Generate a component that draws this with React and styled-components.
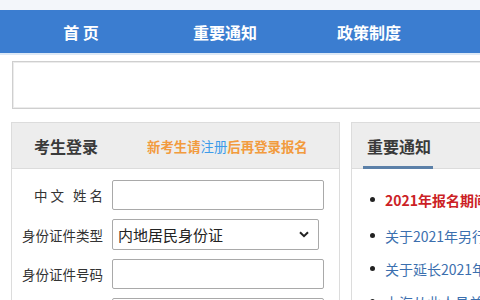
import React from 'react';
import styled, { createGlobalStyle } from 'styled-components';

const GlobalStyle = createGlobalStyle`
  html, body {
    margin: 0;
    padding: 0;
    overflow: hidden;
    background: #fff;
  }
  body {
    font-family: "Noto Sans CJK SC", "Noto Sans", sans-serif;
    color: #333;
  }
`;

const Page = styled.div`
  width: 1000px;
`;

const TopStrip = styled.div`
  height: 10px;
  background: #f3f6fa;
`;

const Nav = styled.nav`
  display: flex;
  height: 43px;
  padding-left: 9px;
  background: #3b7dd0;
  border-bottom: 2px solid #dde9f6;
`;

const NavItem = styled.a`
  width: 144px;
  display: flex;
  align-items: center;
  justify-content: center;
  color: #fff;
  font-size: 16px;
  font-weight: 700;
  white-space: pre;
  text-decoration: none;
`;

const Banner = styled.div`
  margin: 6px 0 0 12px;
  height: 46px;
  border: 1px solid #cfcfcf;
  box-shadow: inset 0 0 0 1px #ececec;
`;

const Main = styled.div`
  display: flex;
  gap: 11px;
  margin: 13px 0 0 11px;
  align-items: flex-start;
`;

const Panel = styled.section`
  width: ${({ width }) => width}px;
  border: 1px solid #dcdcdc;
  background: #fff;
`;

const PanelHead = styled.div`
  height: 45px;
  display: flex;
  align-items: center;
  background: #ededed;
  border-bottom: 1px solid #dcdcdc;
  padding-left: ${({ pad }) => pad}px;
  position: relative;
`;

const HeadTitle = styled.h2`
  margin: 0;
  font-size: 16px;
  font-weight: 700;
  color: #3a3a3a;
`;

const HeadNote = styled.span`
  margin-left: 49px;
  font-size: 13.4px;
  font-weight: 700;
  color: #f29b3e;
`;

const Link = styled.a`
  color: #3d9be9;
  font-weight: 400;
`;

const TabLine = styled.div`
  position: absolute;
  left: 11px;
  bottom: -1px;
  width: 70px;
  height: 3px;
  background: #5b80a8;
`;

const Form = styled.div`
  display: grid;
  grid-template-columns: 81px 212px;
  column-gap: 9px;
  row-gap: 9px;
  padding: 11px 0 0 10px;
  align-items: center;
`;

const Label = styled.label`
  font-size: 13.5px;
  color: #333;
  text-align: right;
  white-space: nowrap;
  letter-spacing: ${({ spread }) => (spread ? '3px' : '0')};
  margin-right: ${({ spread }) => (spread ? '-3px' : '0')};
`;

const Input = styled.div`
  height: 28px;
  border: 1px solid #a9a9a9;
  border-radius: 2px;
  background: #fff;
`;

const Select = styled.div`
  width: 207px;
  height: 31px;
  border: 1px solid #a9a9a9;
  border-radius: 2px;
  display: flex;
  align-items: center;
  justify-content: space-between;
  padding: 0 9px 0 5px;
  box-sizing: border-box;
  font-size: 15px;
  color: #222;
`;

const NoticeList = styled.ul`
  list-style: none;
  margin: 0;
  padding: 14px 0 0 15px;
`;

const Notice = styled.li`
  display: flex;
  align-items: center;
  height: 33px;
  margin-bottom: ${({ hot }) => (hot ? '3px' : '0')};
  font-size: 14px;
  white-space: nowrap;
  color: ${({ hot }) => (hot ? '#cc1f26' : '#3b6fae')};
  font-weight: ${({ hot }) => (hot ? 700 : 400)};
  &::before {
    content: '';
    width: 5px;
    height: 5px;
    border-radius: 50%;
    background: #222;
    margin: 0 10px 0 3px;
    flex: none;
  }
`;

const Chevron = () => (
  <svg width="10" height="7" viewBox="0 0 10 7">
    <path d="M1 1.2 L5 5.2 L9 1.2" fill="none" stroke="#222" strokeWidth="2" />
  </svg>
);

const navItems = ['首 页', '重要通知', '政策制度', '报名入口'];

const notices = [
  { text: '2021年报名期间考生须知', hot: true },
  { text: '关于2021年另行组织考试的通知' },
  { text: '关于延长2021年报名时间的通知' },
  { text: '上海从业人员关于开展考试的通知' },
];

export default function App() {
  return (
    <Page>
      <GlobalStyle />
      <TopStrip />
      <Nav>
        {navItems.map(item => (
          <NavItem key={item}>{item}</NavItem>
        ))}
      </Nav>
      <Banner />
      <Main>
        <Panel width={327}>
          <PanelHead pad={22}>
            <HeadTitle>考生登录</HeadTitle>
            <HeadNote>
              新考生请<Link>注册</Link>后再登录报名
            </HeadNote>
          </PanelHead>
          <Form>
            <Label spread>中文 姓名</Label>
            <Input />
            <Label>身份证件类型</Label>
            <Select>
              内地居民身份证
              <Chevron />
            </Select>
            <Label>身份证件号码</Label>
            <Input />
            <Label>登录密码</Label>
            <Input />
          </Form>
        </Panel>
        <Panel width={300}>
          <PanelHead pad={15}>
            <HeadTitle>重要通知</HeadTitle>
            <TabLine />
          </PanelHead>
          <NoticeList>
            {notices.map(n => (
              <Notice key={n.text} hot={n.hot}>
                {n.text}
              </Notice>
            ))}
          </NoticeList>
        </Panel>
      </Main>
    </Page>
  );
}
